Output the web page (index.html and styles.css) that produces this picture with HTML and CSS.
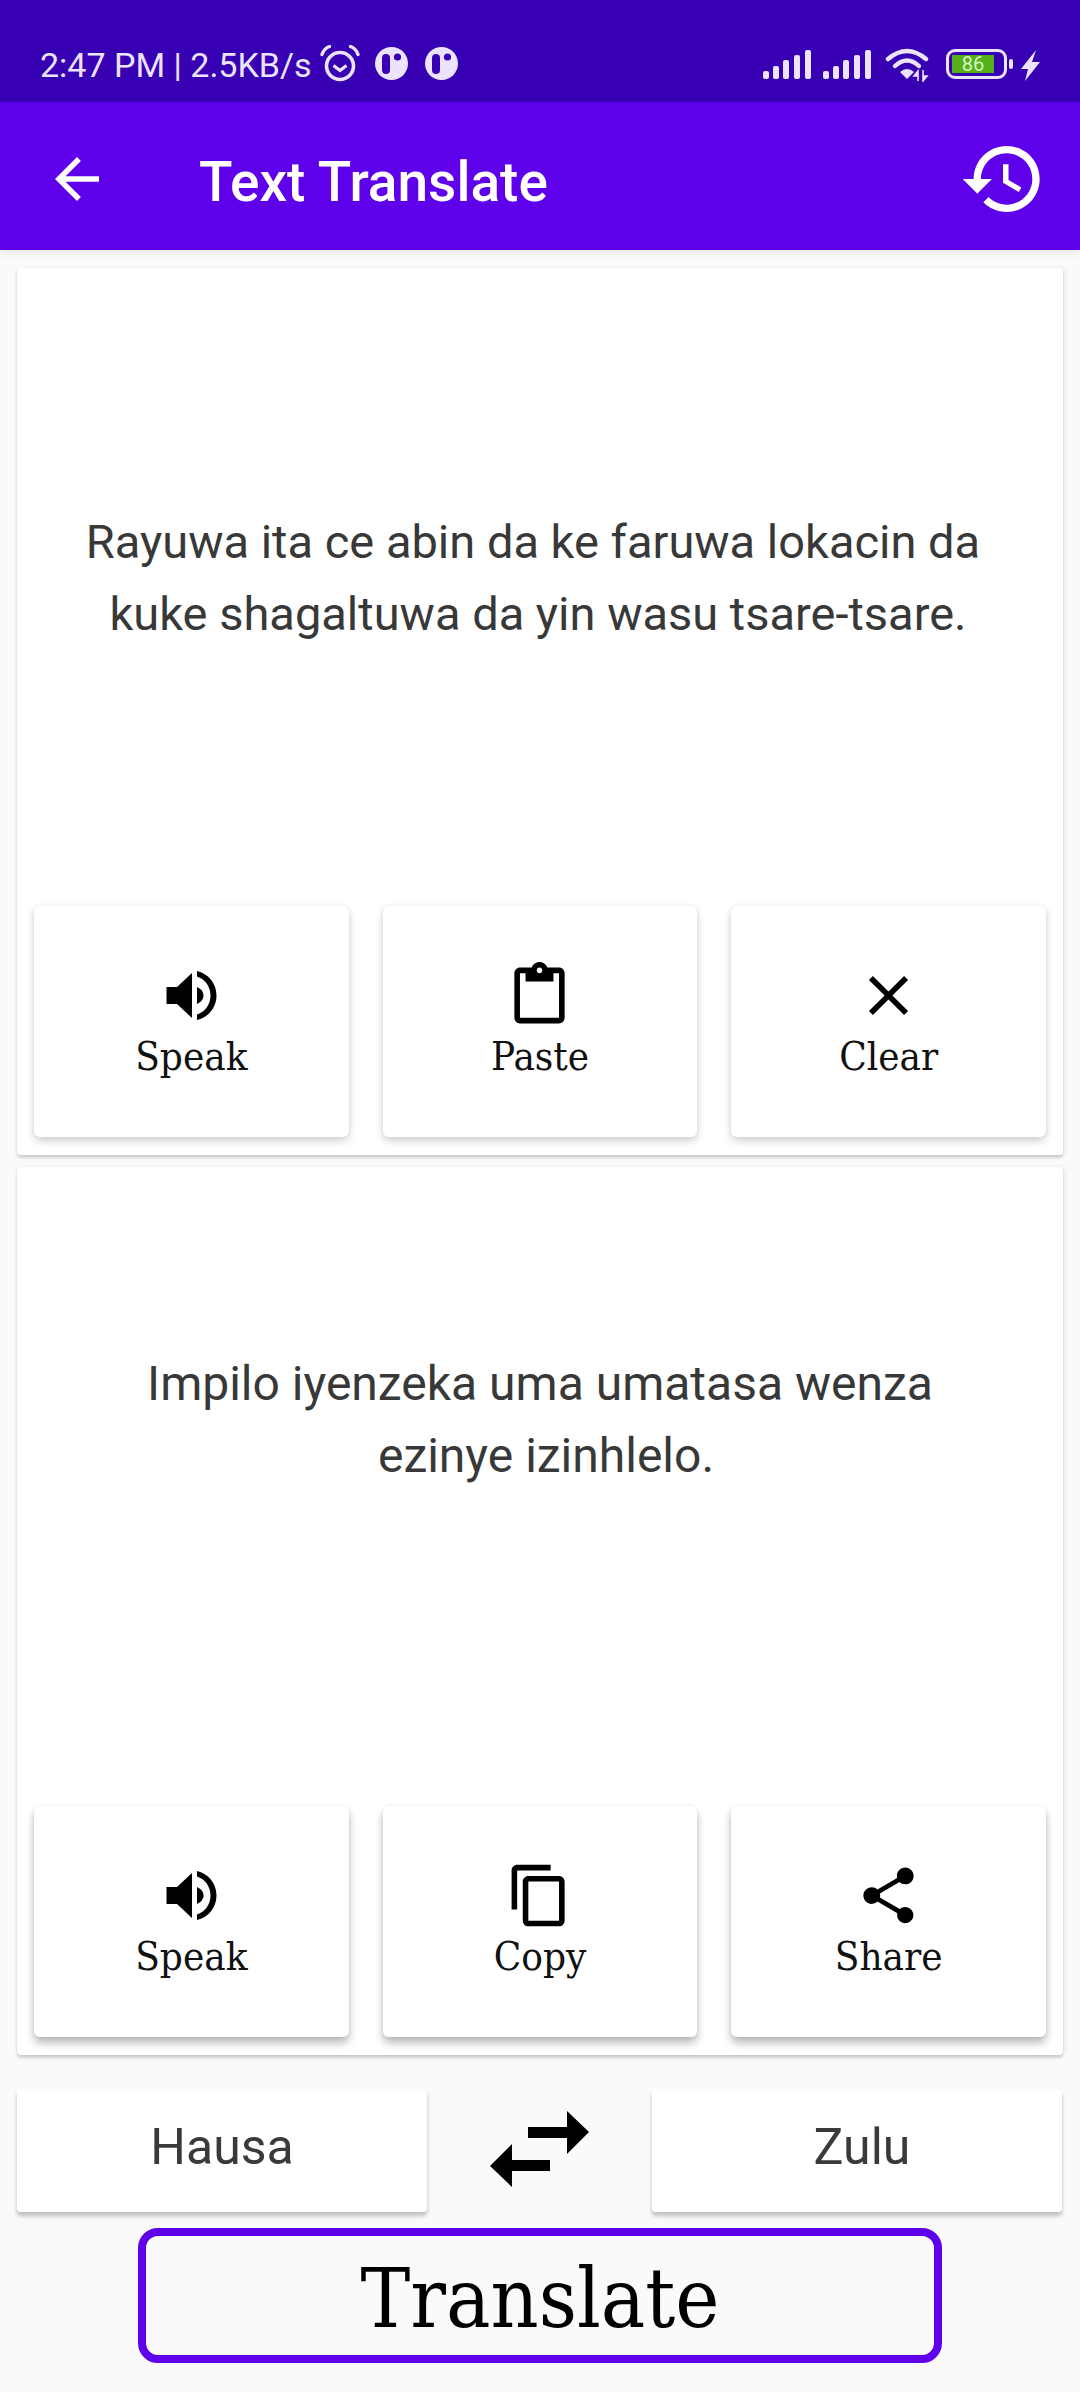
FILE: index.html
```html
<!DOCTYPE html>
<html lang="en">
<head>
<meta charset="utf-8">
<title>Text Translate</title>
<link rel="stylesheet" href="styles.css">
</head>
<body>
<div class="screen">
  <header class="status">
    <span class="status-text">2:47 PM | 2.5KB/s</span>
    <svg class="ic-alarm" viewBox="0 0 40 37"><circle cx="20" cy="21" r="13.5" fill="none" stroke="currentColor" stroke-width="3.6"/><path d="M13.5 20.5l6.5 5 6.5-5" fill="none" stroke="currentColor" stroke-width="3.2"/><path d="M2 9.5Q4 3.5 9.5 1.5M38 9.5Q36 3.5 30.5 1.5" fill="none" stroke="currentColor" stroke-width="3.4" stroke-linecap="round"/></svg>
    <svg class="ic-dot" viewBox="0 0 33 33"><circle cx="16.5" cy="16.5" r="16.5" fill="currentColor"/><rect x="7" y="7" width="8" height="20" rx="4" fill="#3700b3"/><circle cx="22.5" cy="10" r="3.6" fill="#3700b3"/></svg>
    <svg class="ic-dot" viewBox="0 0 33 33"><circle cx="16.5" cy="16.5" r="16.5" fill="currentColor"/><rect x="7" y="7" width="8" height="20" rx="4" fill="#3700b3"/><circle cx="22.5" cy="10" r="3.6" fill="#3700b3"/></svg>
    <div class="status-right">
      <svg class="ic-signal" viewBox="0 0 48 29"><g fill="currentColor"><rect x="0" y="21" width="6" height="8" rx="2"/><rect x="10" y="16" width="6" height="13" rx="2"/><rect x="20" y="10" width="6" height="19" rx="2"/><rect x="31" y="5" width="6" height="24" rx="2"/><rect x="42" y="0" width="6" height="29" rx="2"/></g></svg>
      <svg class="ic-signal" viewBox="0 0 48 29"><g fill="currentColor"><rect x="0" y="21" width="6" height="8" rx="2"/><rect x="10" y="16" width="6" height="13" rx="2"/><rect x="20" y="10" width="6" height="19" rx="2"/><rect x="31" y="5" width="6" height="24" rx="2"/><rect x="42" y="0" width="6" height="29" rx="2"/></g></svg>
      <svg class="ic-wifi" viewBox="0 0 46 34"><g fill="none" stroke="currentColor" stroke-width="4.4" stroke-linecap="round"><path d="M3 11Q22-5 41 11"/><path d="M10 18Q22 7 34 18"/></g><path d="M15 24Q22 18 29 24L22 31Z" fill="currentColor"/><path d="M33 33V23l-4 5h4M38 22v11l4-5h-4" fill="currentColor" stroke="currentColor" stroke-width="1.6"/></svg>
      <div class="battery"><span class="battery-level">86</span></div>
      <span class="battery-tip"></span>
      <svg class="ic-bolt" viewBox="0 0 19 31"><path d="M15 0L0 19h7L4 31 19 12h-8z" fill="currentColor"/></svg>
    </div>
  </header>

  <div class="appbar">
    <svg class="ic-back" viewBox="0 0 24 24"><path fill="currentColor" d="M20 11H7.830l5.590-5.590L12 4l-8 8 8 8 1.410-1.410L7.830 13H20v-2z"/></svg>
    <h1 class="title">Text Translate</h1>
    <svg class="ic-history" viewBox="0 0 24 24"><path fill="currentColor" d="M13 3c-4.970 0-9 4.030-9 9H1l3.890 3.890.07.14L9 12H6c0-3.870 3.130-7 7-7s7 3.130 7 7-3.130 7-7 7c-1.930 0-3.680-.79-4.940-2.060l-1.420 1.420C8.270 19.990 10.510 21 13 21c4.970 0 9-4.030 9-9s-4.030-9-9-9zm-1 5v5l4.280 2.540.72-1.210-3.500-2.080V8H12z"/></svg>
  </div>

  <main class="content">
    <section class="card card-source">
      <p class="text text-source"><span class="line-left">Rayuwa ita ce abin da ke faruwa lokacin da</span><br>kuke shagaltuwa da yin wasu tsare-tsare.</p>
      <div class="actions">
        <button class="action">
          <svg class="icon" viewBox="0 0 67 67"><path fill="currentColor" d="M8.500 25H19L34 11V56L19 42H8.500Z"/><path fill="currentColor" d="M39 25C42.500 26.500 45.500 29.500 45.500 33.500C45.500 37.500 42.500 40.500 39 42Z"/><path fill="currentColor" d="M39 9C50 11.500 58.500 21 58.500 33.500C58.500 46 50 55.500 39 58V52.500C47 50 52.500 42.500 52.500 33.500C52.500 24.500 47 17 39 14.500Z"/></svg>
          <span class="label">Speak</span>
        </button>
        <button class="action">
          <svg class="icon" viewBox="0 0 24 24"><path fill="currentColor" d="M19 2h-4.180C14.400.84 13.300 0 12 0c-1.300 0-2.400.84-2.820 2H5c-1.100 0-2 .9-2 2v16c0 1.100.9 2 2 2h14c1.100 0 2-.9 2-2V4c0-1.100-.9-2-2-2zm-7 0c.55 0 1 .45 1 1s-.45 1-1 1-1-.45-1-1 .45-1 1-1zm7 18H5V4h2v3h10V4h2v16z"/></svg>
          <span class="label">Paste</span>
        </button>
        <button class="action">
          <svg class="icon" viewBox="0 0 24 24"><path fill="currentColor" d="M19 6.410L17.590 5 12 10.590 6.410 5 5 6.410 10.590 12 5 17.590 6.410 19 12 13.410 17.590 19 19 17.590 13.410 12z"/></svg>
          <span class="label">Clear</span>
        </button>
      </div>
    </section>

    <section class="card card-target">
      <p class="text text-target">Impilo iyenzeka uma umatasa wenza<br><span class="line-right">ezinye izinhlelo.</span></p>
      <div class="actions">
        <button class="action">
          <svg class="icon" viewBox="0 0 67 67"><path fill="currentColor" d="M8.500 25H19L34 11V56L19 42H8.500Z"/><path fill="currentColor" d="M39 25C42.500 26.500 45.500 29.500 45.500 33.500C45.500 37.500 42.500 40.500 39 42Z"/><path fill="currentColor" d="M39 9C50 11.500 58.500 21 58.500 33.500C58.500 46 50 55.500 39 58V52.500C47 50 52.500 42.500 52.500 33.500C52.500 24.500 47 17 39 14.500Z"/></svg>
          <span class="label">Speak</span>
        </button>
        <button class="action">
          <svg class="icon" viewBox="0 0 24 24"><path fill="currentColor" d="M16 1H4c-1.100 0-2 .9-2 2v14h2V3h12V1zm3 4H8c-1.100 0-2 .9-2 2v14c0 1.100.9 2 2 2h11c1.100 0 2-.9 2-2V7c0-1.100-.9-2-2-2zm0 16H8V7h11v14z"/></svg>
          <span class="label">Copy</span>
        </button>
        <button class="action">
          <svg class="icon" viewBox="0 0 24 24"><path fill="currentColor" d="M18 16.080c-.76 0-1.440.3-1.960.77L8.910 12.700c.05-.23.09-.46.09-.7s-.04-.47-.09-.7l7.050-4.110c.54.5 1.250.81 2.040.81 1.660 0 3-1.340 3-3s-1.340-3-3-3-3 1.340-3 3c0 .24.04.47.09.7L8.040 9.810C7.500 9.310 6.790 9 6 9c-1.660 0-3 1.340-3 3s1.340 3 3 3c.79 0 1.500-.31 2.040-.81l7.120 4.160c-.05.21-.08.43-.08.65 0 1.610 1.310 2.920 2.920 2.920 1.610 0 2.920-1.310 2.920-2.920s-1.310-2.920-2.920-2.920z"/></svg>
          <span class="label">Share</span>
        </button>
      </div>
    </section>

    <div class="languages">
      <button class="lang">Hausa</button>
      <svg class="ic-swap" viewBox="0 0 100 80"><path d="M39 17H78V1L100 22 78 44V28H39Z"/><path d="M61 50H23V34L1 56 23 77V61H61Z"/></svg>
      <button class="lang lang-target">Zulu</button>
    </div>

    <button class="translate">Translate</button>
  </main>
</div>
</body>
</html>
```
FILE: styles.css
```css
* { box-sizing: border-box; }
html, body { margin: 0; padding: 0; background: #fff; }
.screen { width: 1080px; height: 2392px; background: #fafafa; overflow: hidden; }

.status {
  height: 102px;
  background: #3700b3;
  color: #ece4ff;
  display: flex;
  align-items: flex-start;
  padding: 46px 40px 0 40px;
}
.status-text { font: 400 34px/38px Roboto, sans-serif; white-space: nowrap; }
.ic-alarm { width: 40px; height: 37px; margin-left: 8px; margin-top: -1px; flex: none; }
.ic-dot { width: 33px; height: 33px; margin-left: 15px; margin-top: 1px; flex: none; }
.ic-dot + .ic-dot { margin-left: 17px; }
.status-right { margin-left: auto; margin-top: -1px; display: flex; align-items: flex-start; }
.ic-signal { width: 48px; height: 29px; margin-right: 12px; margin-top: 5px; flex: none; }
.ic-signal + .ic-signal { margin-right: 14px; }
.ic-wifi { width: 46px; height: 34px; margin-top: 3px; flex: none; }
.battery {
  width: 61px; height: 30px; margin-left: 15px; margin-top: 4px;
  border: 3.500px solid #ece4ff; border-radius: 9px;
  padding: 3px 10px 3px 3px; flex: none;
}
.battery-level {
  display: block; height: 18px; background: #55b01a; color: #d5f7c0;
  font: 400 20px/19px Roboto, sans-serif; text-align: center;
}
.battery-tip { width: 4px; height: 10px; margin: 14px 0 0 2px; background: #ece4ff; border-radius: 2px; flex: none; }
.ic-bolt { width: 19px; height: 31px; margin: 5px 0 0 8px; flex: none; }

.appbar {
  height: 148px;
  background: #5e00ea;
  color: #fff;
  display: flex;
  align-items: center;
  padding: 6px 0 0 44px;
  box-shadow: 0 3px 8px rgba(0,0,0,.08);
  position: relative;
}
.ic-back { width: 66px; height: 66px; flex: none; }
.title { margin: 6px 0 0 89px; font: 500 55px/66px Roboto, sans-serif; color: #fff; }
.ic-history { width: 88px; height: 88px; margin-left: auto; margin-right: 33px; flex: none; }

.content { display: flex; flex-direction: column; padding: 18px 17px 0; }
.card {
  background: #fff;
  border-radius: 4px;
  box-shadow: 0 3px 3px rgba(0,0,0,.16), 3px 0 4px rgba(0,0,0,.05), -2px 0 3px rgba(0,0,0,.03);
  display: flex;
  flex-direction: column;
  padding: 0 17px 18px;
}
.card-source { height: 887px; }
.card-target { height: 888px; margin-top: 12px; }
.text {
  flex: 1;
  margin: 0;
  font: 400 47px/72px Roboto, sans-serif;
  color: #383838;
  text-align: center;
}
.text-source { padding: 238px 4px 0 0; }
.text-target { padding-top: 181px; font-size: 48px; }
.line-left { padding-right: 10px; }
.line-right { padding-left: 12px; }

.actions { display: grid; grid-template-columns: repeat(3, 1fr); gap: 34px; }
.action {
  height: 231px;
  background: #fff;
  border: 0;
  border-radius: 6px;
  padding: 56px 0 0;
  color: #000;
  display: flex;
  flex-direction: column;
  align-items: center;
  justify-content: flex-start;
  box-shadow: 0 4px 8px rgba(0,0,0,.18), 0 0 5px rgba(0,0,0,.06);
}
.card-target .action { box-shadow: 0 6px 9px rgba(0,0,0,.27), 0 0 5px rgba(0,0,0,.06); }
.icon { width: 67px; height: 67px; flex: none; }
.label {
  margin-top: 2px;
  font-family: "DejaVu Serif", "Liberation Serif", serif;
  font-stretch: condensed;
  font-size: 40px;
  line-height: 50px;
  color: #111;
}

.languages { display: flex; justify-content: space-between; align-items: center; margin: 34px 1px 0 0; height: 123px; }
.lang {
  width: 410px;
  height: 123px;
  background: #fff;
  border: 0;
  border-radius: 4px;
  font: 400 50px/60px Roboto, sans-serif;
  color: #3a3a3a;
  box-shadow: 0 4px 4px rgba(0,0,0,.24);
  padding: 0 0 8px;
}
.lang-target { padding-left: 10px; }
.ic-swap { width: 100px; height: 80px; flex: none; fill: #000; margin: -1px 0 0 -2px; }

.translate {
  display: block;
  width: 804px;
  height: 135px;
  margin: 16px 0 0 121px;
  background: #fafafa;
  border: 8px solid #5e00ea;
  border-radius: 20px;
  font-family: "DejaVu Serif", "Liberation Serif", serif;
  font-stretch: condensed;
  font-size: 83px;
  line-height: 100px;
  color: #000;
  padding: 6px 0 0;
}
```
